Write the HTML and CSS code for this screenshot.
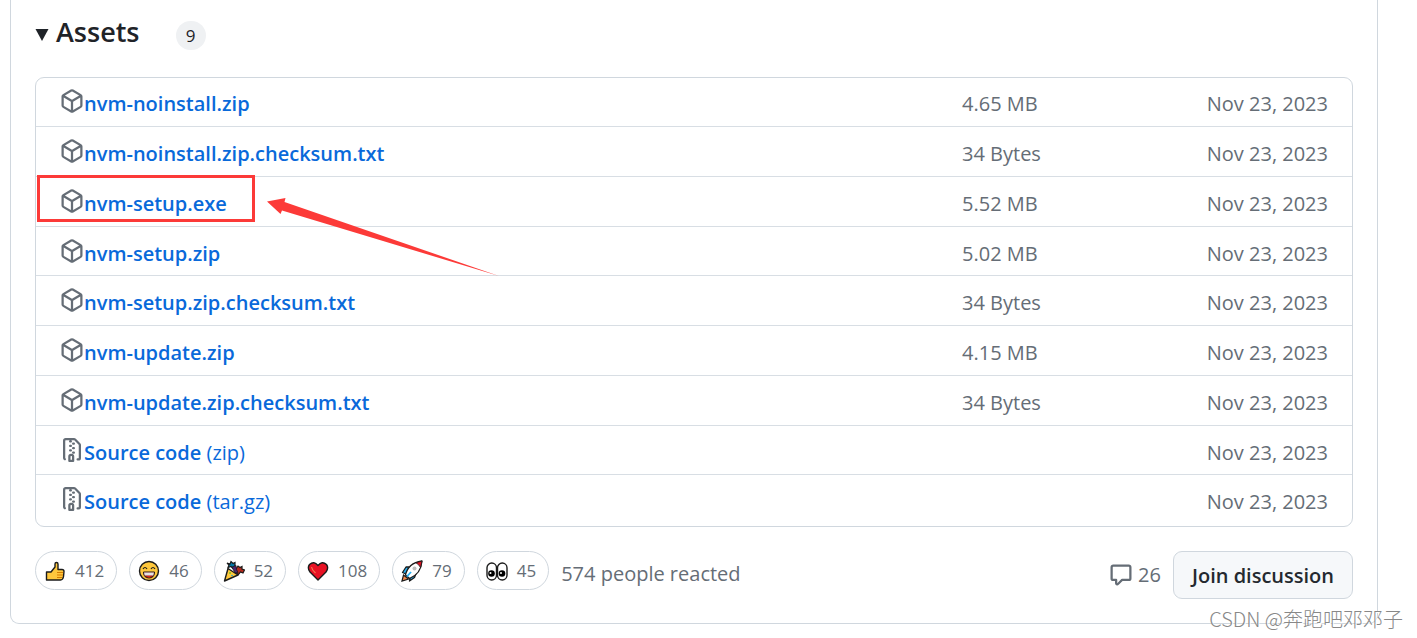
FILE: index.html
```html
<!DOCTYPE html>
<html lang="en">
<head>
    <meta charset="UTF-8">
    <meta name="viewport" content="width=device-width, initial-scale=1.0">
    <title>Release assets</title>
    <link rel="stylesheet" href="styles.css">
</head>
<body>

    <!-- Shared icons -->
    <svg class="icon-defs" aria-hidden="true">
        <symbol id="package" viewBox="0 0 16 16">
            <path d="m8.878.392 5.25 3.045c.54.314.872.89.872 1.514v6.098a1.75 1.75 0 0 1-.872 1.514l-5.25 3.045a1.75 1.75 0 0 1-1.756 0l-5.25-3.045A1.75 1.75 0 0 1 1 11.049V4.951c0-.624.332-1.201.872-1.514L7.122.392a1.75 1.75 0 0 1 1.756 0ZM7.875 1.69l-4.63 2.685L8 7.133l4.755-2.758-4.63-2.685a.248.248 0 0 0-.25 0ZM2.5 5.677v5.372c0 .09.047.171.125.216l4.625 2.683V8.432Zm6.25 8.271 4.625-2.683a.25.25 0 0 0 .125-.216V5.677L8.75 8.432Z"/>
        </symbol>
        <symbol id="file-zip" viewBox="0 0 16 16">
            <path d="M3.5 1.75v11.5c0 .09.048.173.126.217a.75.75 0 0 1-.752 1.298A1.748 1.748 0 0 1 2 13.25V1.75C2 .784 2.784 0 3.75 0h5.586c.464 0 .909.185 1.237.513l2.914 2.914c.329.328.513.773.513 1.237v8.586A1.75 1.75 0 0 1 12.25 15h-.5a.75.75 0 0 1 0-1.5h.5a.25.25 0 0 0 .25-.25V4.664a.25.25 0 0 0-.073-.177L9.513 1.573a.25.25 0 0 0-.177-.073H7.25a.75.75 0 0 1 0 1.5h-.5a.75.75 0 0 1 0-1.5h-3a.25.25 0 0 0-.25.25Zm3.75 8.75h.5c.966 0 1.75.784 1.75 1.75v3a.75.75 0 0 1-.75.75h-2.5a.75.75 0 0 1-.75-.75v-3c0-.966.784-1.75 1.75-1.75ZM6 5.25a.75.75 0 0 1 .75-.75h.5a.75.75 0 0 1 0 1.5h-.5A.75.75 0 0 1 6 5.25Zm.75 2.25h.5a.75.75 0 0 1 0 1.5h-.5a.75.75 0 0 1 0-1.5ZM8 6.75A.75.75 0 0 1 8.75 6h.5a.75.75 0 0 1 0 1.5h-.5A.75.75 0 0 1 8 6.75ZM8.75 3h.5a.75.75 0 0 1 0 1.5h-.5a.75.75 0 0 1 0-1.5ZM8 9.75A.75.75 0 0 1 8.75 9h.5a.75.75 0 0 1 0 1.5h-.5A.75.75 0 0 1 8 9.75Zm-1 2.5v2.25h1v-2.25a.25.25 0 0 0-.25-.25h-.5a.25.25 0 0 0-.25.25Z"/>
        </symbol>
    </svg>

    <main class="release">
        <details class="assets" open>
            <summary>
                <svg class="caret" viewBox="0 0 13 12"><path d="M0 0h13L6.500 12z"/></svg>
                <h3>Assets</h3>
                <span class="counter">9</span>
            </summary>

            <ul class="asset-list">
                <li>
                    <a href="#"><svg class="icon"><use href="#package"/></svg><b>nvm-noinstall.zip</b></a>
                    <span class="size">4.65 MB</span>
                    <span class="date">Nov 23, 2023</span>
                </li>
                <li>
                    <a href="#"><svg class="icon"><use href="#package"/></svg><b>nvm-noinstall.zip.checksum.txt</b></a>
                    <span class="size">34 Bytes</span>
                    <span class="date">Nov 23, 2023</span>
                </li>
                <li class="marked">
                    <a href="#"><svg class="icon"><use href="#package"/></svg><b>nvm-setup.exe</b></a>
                    <span class="size">5.52 MB</span>
                    <span class="date">Nov 23, 2023</span>
                    <!-- Red box and arrow pointing at the installer -->
                    <span class="mark-box"></span>
                    <svg class="mark-arrow" viewBox="0 0 232 78"><path d="M0 3.500 18.500 0 17.500 4 232 78 15 12.500 13.500 16z"/></svg>
                </li>
                <li>
                    <a href="#"><svg class="icon"><use href="#package"/></svg><b>nvm-setup.zip</b></a>
                    <span class="size">5.02 MB</span>
                    <span class="date">Nov 23, 2023</span>
                </li>
                <li>
                    <a href="#"><svg class="icon"><use href="#package"/></svg><b>nvm-setup.zip.checksum.txt</b></a>
                    <span class="size">34 Bytes</span>
                    <span class="date">Nov 23, 2023</span>
                </li>
                <li>
                    <a href="#"><svg class="icon"><use href="#package"/></svg><b>nvm-update.zip</b></a>
                    <span class="size">4.15 MB</span>
                    <span class="date">Nov 23, 2023</span>
                </li>
                <li>
                    <a href="#"><svg class="icon"><use href="#package"/></svg><b>nvm-update.zip.checksum.txt</b></a>
                    <span class="size">34 Bytes</span>
                    <span class="date">Nov 23, 2023</span>
                </li>
                <li>
                    <a href="#"><svg class="icon"><use href="#file-zip"/></svg><b>Source code</b>&nbsp;(zip)</a>
                    <span class="date">Nov 23, 2023</span>
                </li>
                <li>
                    <a href="#"><svg class="icon"><use href="#file-zip"/></svg><b>Source code</b>&nbsp;(tar.gz)</a>
                    <span class="date">Nov 23, 2023</span>
                </li>
            </ul>
        </details>

        <div class="release-footer">
            <div class="reactions">
                <button type="button" aria-label="Thumbs up">
                    <svg class="emoji" viewBox="0 0 22 22">
                        <path d="M2.500 12H7l4-5V4q0-1.500 1.500-1.500T14 4v5.500h4q2 0 2 2l-.5 5q-.5 3.500-3 3.500h-14z" fill="#ffc83d" stroke="#1b1b1b" stroke-width="1.400" stroke-linejoin="round"/>
                        <path d="M13 12.500h6M13 15h6M13 17.500h5" stroke="#d67d00" fill="none"/>
                    </svg>
                    <span>412</span>
                </button>
                <button type="button" aria-label="Laugh">
                    <svg class="emoji" viewBox="0 0 22 22">
                        <circle cx="11" cy="11" r="9.500" fill="#ffc83d" stroke="#1b1b1b" stroke-width="1.400"/>
                        <path d="M5 9q2-3 4 0M13 9q2-3 4 0" stroke="#1b1b1b" stroke-width="1.200" fill="none"/>
                        <path d="M5.500 12h11q0 6-5.500 6t-5.500-6z" fill="#a31515" stroke="#1b1b1b"/>
                        <path d="M6 12.500h10l-.7 3h-8.600z" fill="#e4e4e4"/>
                        <path d="M8.500 16.800q2.500-1 5 0-2.500 1.600-5 0z" fill="#f03a17"/>
                    </svg>
                    <span>46</span>
                </button>
                <button type="button" aria-label="Hooray">
                    <svg class="emoji" viewBox="0 0 22 22">
                        <path d="m5 8.500 10 6.500-13.500 6z" fill="#ffc83d" stroke="#1b1b1b" stroke-width="1.400" stroke-linejoin="round"/>
                        <path d="m4 3 3 1 1-2.500 2 2 2-1v3l-2 3-2-2-3 1 1-2.500z" fill="#0078a8" stroke="#1b1b1b" stroke-width="1.200"/>
                        <path d="m13 9 2-3 2 1.500 2-1V9l2.500 1-1.500 3-2.500-1-2 2.500-3-2z" fill="#b52a1c" stroke="#1b1b1b" stroke-width="1.200"/>
                        <path d="m9 7 4-1.500.5 4 1.500 3-3 .5z" fill="#4b246e" stroke="#1b1b1b" stroke-width=".8"/>
                        <circle cx="7" cy="13" r=".8" fill="#16c60c"/>
                        <circle cx="9" cy="15.500" r=".8" fill="#00a2ed"/>
                    </svg>
                    <span>52</span>
                </button>
                <button type="button" aria-label="Heart">
                    <svg class="emoji" viewBox="0 0 22 22">
                        <path d="M11 20 3 12Q0 8 2.500 4.500 7 .5 11 5.500 15 .5 19.500 4.500 22 8 19 12z" fill="#e81224" stroke="#1b1b1b" stroke-width="1.400" stroke-linejoin="round"/>
                        <path d="M4.500 7q.5 3 4 6" stroke="#f2794f" stroke-width="1.200" fill="none"/>
                    </svg>
                    <span>108</span>
                </button>
                <button type="button" aria-label="Rocket">
                    <svg class="emoji" viewBox="0 0 22 22">
                        <path d="m1 21 1.500-6 5 4z" fill="#f7894a" stroke="#1b1b1b" stroke-width="1.200"/>
                        <path d="M8 7H5l-3.500 5.500L5 14l4 4-.5 3 5-3.500 1.500-4z" fill="#26b0f2" stroke="#1b1b1b" stroke-width="1.300" stroke-linejoin="round"/>
                        <path d="M4.500 15Q7 3 21 1q-1 13-12.500 17.500z" fill="#fff" stroke="#1b1b1b" stroke-width="1.300" stroke-linejoin="round"/>
                        <path d="M15 2.800 21 1l-1.500 6.500Q18 4.500 15 2.800z" fill="#e81224" stroke="#1b1b1b" stroke-width=".8"/>
                        <circle cx="13.500" cy="8.500" r="2" fill="#bdbdbd"/>
                        <path d="m6 16.500 4-4.500" stroke="#26b0f2" stroke-width="1.800"/>
                    </svg>
                    <span>79</span>
                </button>
                <button type="button" aria-label="Eyes">
                    <svg class="emoji" viewBox="0 0 22 22">
                        <rect x="1" y="3" width="9.500" height="17" rx="4.750" fill="#fff" stroke="#1b1b1b" stroke-width="1.400"/>
                        <rect x="11.500" y="3" width="9.500" height="17" rx="4.750" fill="#fff" stroke="#1b1b1b" stroke-width="1.400"/>
                        <circle cx="5.500" cy="13.500" r="3.300" fill="#000"/>
                        <circle cx="16" cy="13.500" r="3.300" fill="#000"/>
                        <circle cx="4.500" cy="13" r="1" fill="#fff"/>
                        <circle cx="15" cy="13" r="1" fill="#fff"/>
                    </svg>
                    <span>45</span>
                </button>
                <span class="reaction-total">574 people reacted</span>
            </div>

            <div class="discussion">
                <a class="comments" href="#">
                    <svg class="icon" viewBox="0 0 16 16"><path d="M1 2.750C1 1.784 1.784 1 2.750 1h10.500c.966 0 1.750.784 1.750 1.750v7.500A1.750 1.750 0 0 1 13.250 12H9.060l-2.573 2.573A1.458 1.458 0 0 1 4 13.543V12H2.750A1.750 1.750 0 0 1 1 10.250Zm1.750-.25a.25.25 0 0 0-.25.25v7.500c0 .138.112.25.25.25h2a.75.75 0 0 1 .75.75v2.190l2.720-2.720a.749.749 0 0 1 .53-.22h4.500a.25.25 0 0 0 .25-.25v-7.500a.25.25 0 0 0-.25-.25Z"/></svg>
                    <span>26</span>
                </a>
                <button type="button" class="join">Join discussion</button>
            </div>
        </div>
    </main>

    <p class="watermark">CSDN @奔跑吧邓邓子</p>

</body>
</html>
```
FILE: styles.css
```css
* {
    box-sizing: border-box;
}

body {
    position: relative;
    margin: 0;
    padding: 0 39px 14px 10px;
    background: #fff;
    color: #1f2328;
    font-family: "Open Sans", "Noto Sans", "Noto Sans CJK SC", sans-serif;
    font-size: 20px;
    line-height: 26px;
}

a {
    text-decoration: none;
}

button {
    font-family: inherit;
    cursor: pointer;
}

.icon-defs {
    position: absolute;
    width: 0;
    height: 0;
}

.icon {
    flex: none;
    width: 24px;
    height: 24px;
    fill: #656d76;
}

.release {
    padding: 12px 24px 24px;
    border: 1px solid #d0d7de;
    border-top: 0;
    border-radius: 0 0 9px 9px;
}

/* Assets heading */
.assets summary {
    display: flex;
    align-items: center;
    margin-bottom: 25px;
    list-style: none;
    cursor: pointer;
}

.caret {
    width: 14px;
    height: 12px;
    margin-top: 6px;
    margin-right: 7px;
    fill: #1f2328;
}

.assets h3 {
    margin: 0;
    font-size: 27px;
    font-weight: 600;
    line-height: 40px;
}

.counter {
    min-width: 30px;
    margin-top: 6px;
    margin-left: 36px;
    border-radius: 15px;
    background: #eff1f3;
    font-size: 17px;
    line-height: 29px;
    text-align: center;
}

/* Asset rows */
.asset-list {
    margin: 0;
    padding: 0;
    border: 1px solid #d0d7de;
    border-radius: 9px;
    list-style: none;
}

.asset-list li {
    display: grid;
    grid-template-columns: 1fr 230px 136px;
    padding: 14px 24px 9px;
    border-top: 1px solid #d8dee4;
    color: #656d76;
}

.asset-list li:nth-child(4n) {
    padding-bottom: 8px;
}

.asset-list li:first-child {
    padding-top: 13px;
    border-top: 0;
}

.asset-list li:last-child {
    padding-bottom: 11px;
}

.asset-list a {
    display: flex;
    color: #0969da;
}

.asset-list .icon {
    margin-top: -2px;
}

.asset-list b {
    font-weight: 600;
}

.date {
    grid-column: 3;
    text-align: right;
}

/* Highlight around the installer row */
.marked {
    position: relative;
}

.mark-box {
    position: absolute;
    top: -2px;
    left: 1px;
    width: 218px;
    height: 47px;
    border: 3px solid #fc3a38;
}

.mark-arrow {
    position: absolute;
    top: 21px;
    left: 231px;
    width: 232px;
    height: 78px;
    fill: #fc3a38;
    z-index: 1;
}

/* Reactions and discussion */
.release-footer {
    display: flex;
    justify-content: space-between;
    margin-top: 24px;
}

.reactions {
    display: flex;
    align-items: flex-start;
    gap: 12px;
}

.reactions button {
    display: flex;
    align-items: center;
    gap: 9px;
    height: 39px;
    padding: 0 12px 0 8px;
    border: 1px solid #d0d7de;
    border-radius: 20px;
    background: #fff;
    color: #656d76;
    font-size: 17px;
}

.emoji {
    width: 22px;
    height: 22px;
}

.reaction-total {
    color: #656d76;
    line-height: 46px;
}

.discussion {
    display: flex;
    align-items: center;
    gap: 12px;
}

.comments {
    display: flex;
    align-items: center;
    gap: 5px;
    color: #656d76;
}

.join {
    height: 48px;
    padding: 0 18px;
    border: 1px solid #d0d7de;
    border-radius: 9px;
    background: #f6f8fa;
    color: #24292f;
    font-size: 20px;
    font-weight: 600;
}

.watermark {
    position: absolute;
    right: 14px;
    bottom: 5px;
    margin: 0;
    color: #888;
    font-family: "Noto Sans CJK SC", sans-serif;
    font-size: 20px;
    font-weight: 300;
    line-height: 28px;
    text-shadow: 1px 1px 0 #fff;
}
```
